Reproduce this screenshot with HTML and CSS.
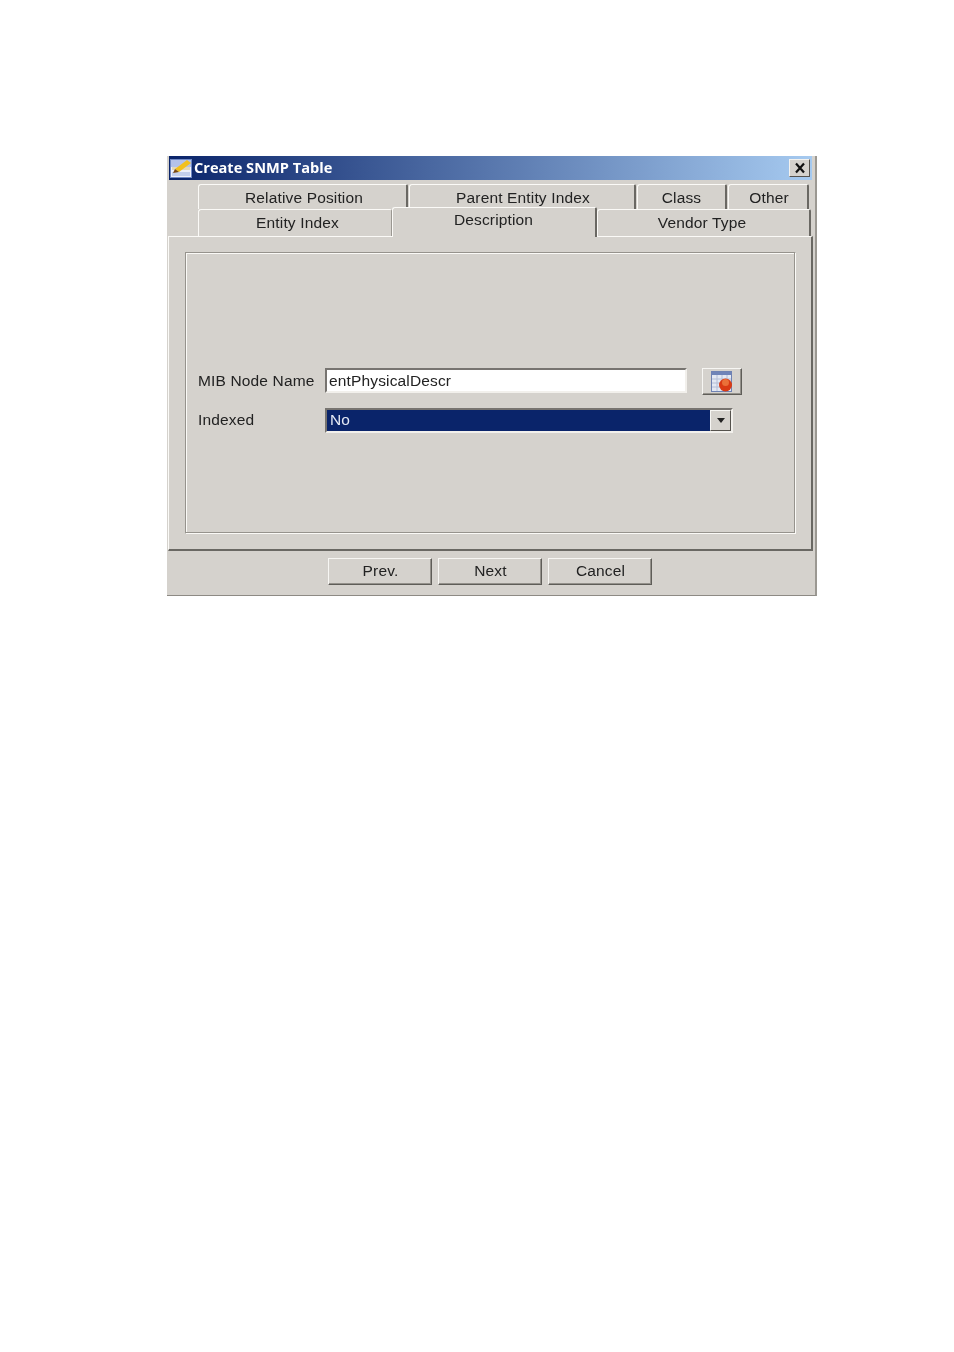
FILE: index.html
```html
<!DOCTYPE html>
<html lang="en">
<head>
<meta charset="utf-8">
<title>Create SNMP Table</title>
<link rel="stylesheet" href="styles.css">
</head>
<body>
<div class="window">
  <div class="titlebar">
    <svg class="app-icon" width="22" height="19" viewBox="0 0 22 19">
      <rect x="0.5" y="0.5" width="21" height="18" fill="#eef1fa" stroke="#6f88c4"/>
      <rect x="1" y="1" width="20" height="7" fill="#b4c2ea"/>
      <rect x="2" y="8" width="18" height="3" fill="#e4d8b8"/>
      <rect x="2" y="13" width="18" height="4" fill="#c4d0ec"/>
      <path d="M5 10 L17 1 L21 4 L9 13 Z" fill="#f2c01e"/>
      <path d="M5 10 L9 13 L3 14 Z" fill="#7a4a12"/>
    </svg>
    <span class="title">Create SNMP Table</span>
    <button class="close" aria-label="Close">
      <svg width="14" height="12" viewBox="0 0 14 12"><path d="M3 1.5 L11 10.5 M11 1.5 L3 10.5" stroke="#111" stroke-width="2.2" fill="none"/></svg>
    </button>
  </div>
  <div class="tabs">
    <div class="tab-row top">
      <div class="tab w-relative">Relative Position</div>
      <div class="tab w-parent">Parent Entity Index</div>
      <div class="tab w-class">Class</div>
      <div class="tab w-other">Other</div>
    </div>
    <div class="tab-row bottom">
      <div class="tab w-entity">Entity Index</div>
      <div class="tab active w-desc">Description</div>
      <div class="tab w-vendor">Vendor Type</div>
    </div>
  </div>
  <div class="panel">
    <div class="group">
      <div class="form-row first">
        <label class="field-label">MIB Node Name</label>
        <div class="text-input">entPhysicalDescr</div>
        <button class="pick" aria-label="Pick">
          <svg width="22" height="21" viewBox="0 0 22 21">
            <rect x="0.5" y="0.5" width="20" height="20" fill="#e3e8f3" stroke="#6f82b3"/>
            <rect x="1" y="1" width="19" height="3" fill="#6f84b8"/>
            <path d="M1 8 H20 M1 12 H20 M1 16 H20 M6 4 V20 M11 4 V20 M16 4 V20" stroke="#b4bed6" stroke-width="1"/>
            <circle cx="14.5" cy="14" r="6.5" fill="#d93a14"/>
            <circle cx="14.5" cy="11.5" r="3.5" fill="#ea7038"/>
          </svg>
        </button>
      </div>
      <div class="form-row second">
        <label class="field-label">Indexed</label>
        <div class="select">
          <span class="select-value">No</span>
          <span class="select-arrow"><svg width="8" height="5" viewBox="0 0 8 5"><path d="M0 0 H8 L4 5 Z" fill="#222"/></svg></span>
        </div>
      </div>
    </div>
  </div>
  <div class="actions">
    <button class="btn">Prev.</button>
    <button class="btn">Next</button>
    <button class="btn">Cancel</button>
  </div>
</div>
</body>
</html>
```
FILE: styles.css
```css
html, body { margin: 0; padding: 0; background: #fff; }
body {
  width: 954px;
  height: 1352px;
  overflow: hidden;
  padding-top: 156px;
  padding-left: 167px;
  box-sizing: border-box;
  font-family: "Liberation Sans", Arial, sans-serif;
  font-size: 15.5px;
  letter-spacing: 0.15px;
  color: #222;
}
.window {
  width: 650px;
  height: 440px;
  box-sizing: border-box;
  background: #d5d2cd;
  border-right: 2px solid #9b9892;
  border-bottom: 1px solid #8d8a84;
  display: flex;
  flex-direction: column;
  filter: blur(0.3px);
}
.titlebar {
  height: 24px;
  margin-left: 2px;
  margin-right: 3px;
  display: flex;
  align-items: center;
  background: linear-gradient(90deg, #0a246a 0%, #a6caf0 100%);
  flex: none;
}
.app-icon { margin-left: 1px; flex: none; }
.title {
  margin-left: 2px;
  margin-bottom: 3px;
  color: #fff;
  font-weight: bold;
  font-size: 14.6px;
  letter-spacing: 0;
  font-family: "Open Sans", "Liberation Sans", sans-serif;
  flex: 1;
}
.close {
  width: 21px;
  height: 18px;
  margin-right: 2px;
  padding: 0;
  display: flex;
  align-items: center;
  justify-content: center;
  background: #d5d2cd;
  border: 1px solid;
  border-color: #f4f2ee #55524d #55524d #f4f2ee;
}
.tabs {
  margin-left: 31px;
  padding-top: 4px;
  flex: none;
}
.tab-row { display: flex; }
.tab-row.top { height: 25px; }
.tab-row.bottom { height: 27px; }
.tab {
  box-sizing: border-box;
  border-top: 1px solid #fbfaf7;
  border-left: 1px solid #fbfaf7;
  border-right: 2px solid #6a6863;
  border-top-left-radius: 3px;
  border-top-right-radius: 2px;
  text-align: center;
  line-height: 25px;
  background: #d5d2cd;
}
.top .tab { margin-right: 1px; }
.bottom .tab { line-height: 25px; }
.w-relative { width: 210px; padding-left: 3px; }
.w-parent { width: 227px; padding-left: 2px; }
.w-class { width: 90px; }
.w-other { width: 81px; padding-left: 2px; }
.w-entity { width: 194px; border-right: 1px solid #9a9791; padding-left: 5px; }
.w-desc { width: 205px; }
.w-vendor { width: 214px; padding-right: 3px; }
.tab.active {
  height: 30px;
  margin-top: -2px;
  line-height: 24px;
  position: relative;
  z-index: 1;
  padding-right: 1px;
}
.panel {
  width: 645px;
  height: 315px;
  margin-left: 1px;
  box-sizing: border-box;
  flex: none;
  padding: 15px 15px 16px 16px;
  border-top: 1px solid #fbfaf7;
  border-left: 1px solid #fbfaf7;
  border-right: 2px solid #6a6863;
  border-bottom: 2px solid #6a6863;
}
.group {
  height: 282px;
  box-sizing: border-box;
  border: 1px solid;
  border-color: #96938d #fbfaf7 #fbfaf7 #96938d;
  box-shadow: inset -1px -1px 0 #96938d, inset 1px 1px 0 #fbfaf7;
  padding-left: 12px;
}
.form-row { display: flex; align-items: center; }
.form-row.first { margin-top: 115px; height: 27px; }
.form-row.second { margin-top: 13px; height: 25px; }
.field-label { width: 127px; flex: none; white-space: nowrap; margin-bottom: 2px; }
.text-input {
  box-sizing: border-box;
  width: 362px;
  height: 25px;
  line-height: 22px;
  padding-left: 2px;
  background: #fff;
  border: 2px solid;
  border-color: #777470 #f2f0ec #f2f0ec #777470;
  align-self: flex-start;
}
.pick {
  margin-left: 15px;
  width: 40px;
  height: 27px;
  padding: 0;
  display: flex;
  align-items: center;
  justify-content: center;
  background: #d5d2cd;
  border: 1px solid;
  border-color: #f7f6f3 #5f5d58 #5f5d58 #f7f6f3;
  box-shadow: inset -1px -1px 0 #94918b;
}
.select {
  box-sizing: border-box;
  width: 408px;
  height: 25px;
  display: flex;
  background: #0a246a;
  border: 2px solid;
  border-color: #777470 #f2f0ec #f2f0ec #777470;
}
.select-value { flex: 1; color: #e6eaf5; line-height: 20px; padding-left: 3px; }
.select-arrow {
  box-sizing: border-box;
  width: 21px;
  display: flex;
  align-items: center;
  justify-content: center;
  background: #d5d2cd;
  border: 1px solid;
  border-color: #f7f6f3 #55524d #55524d #f7f6f3;
}
.actions {
  display: flex;
  gap: 6px;
  margin-left: 161px;
  margin-top: 7px;
}
.btn {
  box-sizing: border-box;
  width: 104px;
  height: 27px;
  padding: 0 0 2px 1px;
  font: inherit;
  letter-spacing: inherit;
  color: #222;
  background: #d5d2cd;
  border: 1px solid;
  border-color: #f7f6f3 #5f5d58 #5f5d58 #f7f6f3;
  box-shadow: inset -1px -1px 0 #94918b;
}
```
